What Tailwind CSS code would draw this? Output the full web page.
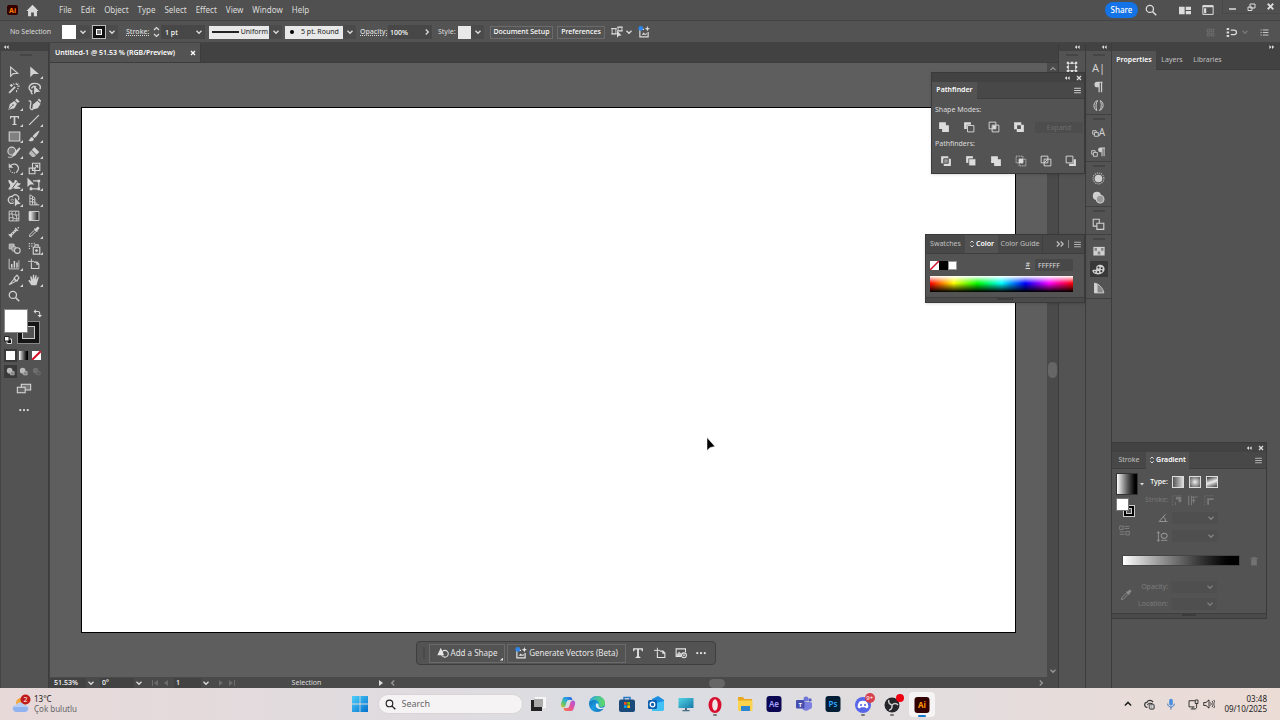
<!DOCTYPE html>
<html lang="en">
<head>
    <meta charset="UTF-8">
    <meta name="viewport" content="width=device-width, initial-scale=1.0">
    <title>Untitled-1 @ 51.53 % (RGB/Preview)</title>
    <script src="https://cdn.jsdelivr.net/npm/@tailwindcss/browser@4"></script>
</head>
<body class="relative flex flex-col h-screen overflow-hidden bg-[#535353] text-[#dcdcdc] text-[7px] leading-[10px] font-['Noto_Sans','Open_Sans',sans-serif]">

    <!-- Icons -->
    <svg class="absolute size-0">
        <defs>
            <linearGradient id="g-bw"><stop stop-color="#fff"/><stop offset="1" stop-color="#111"/></linearGradient>
            <linearGradient id="g-win" x2="1" y2="1"><stop stop-color="#4fd0fb"/><stop offset="1" stop-color="#0470cc"/></linearGradient>
            <linearGradient id="g-edge" x2="1" y2="1"><stop stop-color="#0c59a4"/><stop offset=".5" stop-color="#1b9de2"/><stop offset="1" stop-color="#1263b0"/></linearGradient>
            <linearGradient id="g-edge2"><stop stop-color="#2aa8ea"/><stop offset="1" stop-color="#62db5e"/></linearGradient>
            <linearGradient id="g-cop" x1="1" x2="0" y2="1"><stop stop-color="#2a5be4"/><stop offset=".4" stop-color="#2aa5e0"/><stop offset=".7" stop-color="#5cc570"/><stop offset="1" stop-color="#f4c13c"/></linearGradient>
            <linearGradient id="g-cop2" x1="1" x2="0" y2="1"><stop stop-color="#a05be8"/><stop offset=".5" stop-color="#e8509a"/><stop offset="1" stop-color="#f4803f"/></linearGradient>
            <linearGradient id="g-mon" x2="1" y2="1"><stop stop-color="#50d4e4"/><stop offset="1" stop-color="#1779a8"/></linearGradient>
        </defs>
        <symbol id="i-down" viewBox="0 0 8 8"><path d="M1.500 2.800 4 5.300l2.500-2.500" fill="none" stroke="currentColor" stroke-width="1.300"/></symbol>
        <symbol id="i-up" viewBox="0 0 8 8"><path d="M1.500 5.200 4 2.700l2.500 2.500" fill="none" stroke="currentColor" stroke-width="1.200"/></symbol>
        <symbol id="i-right" viewBox="0 0 8 8"><path d="M2.800 1.500 5.300 4 2.800 6.500" fill="none" stroke="currentColor" stroke-width="1.300"/></symbol>
        <symbol id="i-left" viewBox="0 0 8 8"><path d="M5.200 1.500 2.700 4l2.500 2.500" fill="none" stroke="currentColor" stroke-width="1.300"/></symbol>
        <symbol id="i-spin" viewBox="0 0 8 12"><path d="M1.500 4 4 1.500 6.500 4M1.500 8 4 10.500 6.500 8" fill="none" stroke="currentColor" stroke-width="1.200"/></symbol>
        <symbol id="i-collapse" viewBox="0 0 8 8"><path d="M4 1.500v5L1 4zM7.500 1.500v5l-3-2.500z" fill="currentColor"/></symbol>
        <symbol id="i-uncollapse" viewBox="0 0 8 8"><path d="M4 1.500v5L7 4zM.5 1.500v5l3-2.500z" fill="currentColor"/></symbol>
        <symbol id="i-expand" viewBox="0 0 8 8"><path d="m1.500 2 2 2-2 2M4.500 2l2 2-2 2" fill="none" stroke="currentColor" stroke-width="1"/></symbol>
        <symbol id="i-x" viewBox="0 0 8 8"><path d="m2 2 4 4M6 2 2 6" stroke="currentColor" stroke-width="1.300"/></symbol>
        <symbol id="i-menu" viewBox="0 0 8 8"><path d="M1 2h6M1 4h6M1 6h6" stroke="currentColor" stroke-width=".8"/></symbol>
        <symbol id="i-search" viewBox="0 0 16 16"><circle cx="6.500" cy="6.500" r="4.800" fill="none" stroke="currentColor" stroke-width="1.700"/><path d="m10 10 5 5" stroke="currentColor" stroke-width="2"/></symbol>
        <symbol id="i-home" viewBox="0 0 16 16"><path d="M8 1 15.500 8.500H13.500V15H9.700V10.500H6.300V15H2.500V8.500H.5z" fill="currentColor"/></symbol>
        <symbol id="i-dots" viewBox="0 0 16 16"><g fill="currentColor"><circle cx="3" cy="8" r="1.500"/><circle cx="8" cy="8" r="1.500"/><circle cx="13" cy="8" r="1.500"/></g></symbol>
        <!-- toolbox -->
        <symbol id="t-select" viewBox="0 0 16 16"><path d="M3.500 1.500v12L7 10.200l6-.4z" fill="none" stroke="currentColor" stroke-width="1.500"/></symbol>
        <symbol id="t-direct" viewBox="0 0 16 16"><path d="M3 .5v14.500l4.200-4.200 7.300-.3z" fill="currentColor"/></symbol>
        <symbol id="t-wand" viewBox="0 0 16 16"><path d="m1.500 14.500 8-8" stroke="currentColor" stroke-width="2.400"/><path d="M11 1v3M15.500 5.500h-3M14 2 12 4M7 2l1.500 1.500M12.500 8 14 9.500M2.500 4.500h4M4.500 2.500v4M11.500 10.500v3" stroke="currentColor" stroke-width="1.400"/></symbol>
        <symbol id="t-lasso" viewBox="0 0 16 16"><path d="M5.500 11C2 11 1 8 1.500 6 2.500 2 7 1 11 2s5 4 3.500 7M4 10.500c-1 2 0 3 1.500 4.500M4.500 8C4.500 5 9 5 10 6" fill="none" stroke="currentColor" stroke-width="1.700"/><path d="M7.500 4.500V15l2.800-2.800 4.700-.2z" fill="currentColor"/></symbol>
        <symbol id="t-pen" viewBox="0 0 16 16"><path d="M.5 15.500 2.500 8l6-4 3.500 3.500L8.500 13.500zM9.500 3l2-2.500L15.500 4.500 13 6.500z" fill="currentColor"/><path d="m1.500 14.500 4.500-4.500" stroke="#535353"/><circle cx="6.700" cy="9.300" r="1.100" fill="#535353"/></symbol>
        <symbol id="t-curve" viewBox="0 0 16 16"><path d="M5 14.500 6 8l5.500-4.500 4 3.500-3.500 5.500zM12 2.500l1.500-2L16 3 15.500 5.500z" fill="currentColor"/><path d="M.7 4c3-2 3.300 2 2.300 5s0 6 3 5" fill="none" stroke="currentColor" stroke-width="1.600"/></symbol>
        <symbol id="t-type" viewBox="0 0 16 16"><path d="M1.500 1.500h13v4h-1.400L12.500 3.300H9.200v9.400l2 .6v1.200H4.800v-1.200l2-.6V3.300H3.500L2.900 5.500H1.500z" fill="currentColor"/></symbol>
        <symbol id="t-line" viewBox="0 0 16 16"><path d="M1.500 14.500 14.500 1.500" stroke="currentColor" stroke-width="1.600"/></symbol>
        <symbol id="t-rect" viewBox="0 0 16 16"><path d="M1.500 2.500h13v11h-13z" fill="#808080" stroke="currentColor" stroke-width="1.400"/></symbol>
        <symbol id="t-brush" viewBox="0 0 16 16"><path d="M15.500.5C12 2 8 5.500 6.200 8.300l2.500 2.500C11.500 8.500 14.500 4 15.500.5zM5.500 9.300C2.500 9.500 3.500 13 .5 13.500c2 2.500 7.300 2 7.300-2z" fill="currentColor"/></symbol>
        <symbol id="t-shaper" viewBox="0 0 16 16"><circle cx="5.500" cy="7" r="4.500" fill="#777" stroke="currentColor" stroke-width="1.300"/><path d="M15.500 4 14 2.500 7 10l-1.500 4L9.500 12z" fill="currentColor"/><path d="M1 14h5" stroke="currentColor"/></symbol>
        <symbol id="t-eraser" viewBox="0 0 16 16"><path d="M8.500 1.500 15 8l-3.500 3.500L5 5z" fill="currentColor"/><path d="m4.200 5.800 6.500 6.500-2 2.200H5.500L1 10z" fill="currentColor" opacity=".8"/></symbol>
        <symbol id="t-rotate" viewBox="0 0 16 16"><path d="M3.500 5C6 1.500 13 2 14 8c0 2-.5 3.500-2 5" fill="none" stroke="currentColor" stroke-width="1.600"/><path d="M12 13c-3 3-9 1.500-10-4" fill="none" stroke="currentColor" stroke-width="1.500" stroke-dasharray="1.500 1.500"/><path d="M1 1.500v6h6z" fill="currentColor"/></symbol>
        <symbol id="t-scale" viewBox="0 0 16 16"><path d="M5.500 1.500h9v9h-9zM1.500 7.500h7v7h-7z" fill="none" stroke="currentColor" stroke-width="1.400"/><path d="m7 9 4.500-4.500M8.500 4H12v3.500" fill="none" stroke="currentColor" stroke-width="1.300"/></symbol>
        <symbol id="t-width" viewBox="0 0 16 16"><path d="M.5 2.500C4 1.500 4.500 6 6.500 6s.5-3.500 3-3.500S11 8 15.500 6c-.5 4-4 2.500-4 5 2-1 3.500 0 4 2.500-3-1-5.500 1-8.500-1-2 0-3 2.500-6.500 1.500C1 11.500 3.500 11 2.500 8 1.500 6 .5 6 .5 2.500z" fill="currentColor"/><path d="m5 13 6-8" stroke="#535353" stroke-width="1.200"/></symbol>
        <symbol id="t-free" viewBox="0 0 16 16"><path d="M.5.500v11L3.700 8.700 8.500 8.500z" fill="currentColor"/><path d="M7 4.500h6.500v9h-9V11" fill="none" stroke="currentColor" stroke-width="1.300"/><path d="M12 3h3v3h-3zM12 12h3v3h-3zM3 12h3v3H3z" fill="currentColor"/></symbol>
        <symbol id="t-builder" viewBox="0 0 16 16"><path d="M8 11a4 4 0 1 1-2-7 4 4 0 0 1 7 4" fill="none" stroke="currentColor" stroke-width="1.400"/><path d="M3 8h6M6 5v6" stroke="currentColor" stroke-dasharray="1 1"/><path d="M9 5v10.500l2.700-2.700 4-.2z" fill="currentColor"/></symbol>
        <symbol id="t-persp" viewBox="0 0 16 16"><path d="M2.500 1v13.500H15M2.500 1 9 5v9M2.500 5.500 9 8M2.500 10l6.500 1M6 3v11" fill="none" stroke="currentColor" stroke-width="1.200"/><path d="M9 9l5.500 5.500H9z" fill="currentColor" opacity=".5"/></symbol>
        <symbol id="t-mesh" viewBox="0 0 16 16"><path d="M1.500 1.500h13v13h-13zM1.500 6c4-3 8 3 13 0M1.500 11c4-3 8 3 13 0M6 1.500c-3 4 3 8 0 13M11 1.500c-3 4 3 8 0 13" fill="none" stroke="currentColor" stroke-width="1.200"/></symbol>
        <symbol id="t-grad" viewBox="0 0 16 16"><path d="M1.500 2h13v12h-13z" fill="url(#g-bw)" stroke="currentColor" stroke-width="1.200"/></symbol>
        <symbol id="t-measure" viewBox="0 0 16 16"><path d="m3 13 8-8" stroke="currentColor" stroke-width="3.200"/><path d="m1 11 4 4M9.500 2.500l4 4M13 3l1.500-1.500" stroke="currentColor" stroke-width="1.600"/><path d="m5.500 9.500 1.500 1.500M8 7l1.500 1.500" stroke="#535353"/></symbol>
        <symbol id="t-eye" viewBox="0 0 16 16"><path d="m2 14 .5-2.500L9 5l2 2-6.500 6.500z" fill="none" stroke="currentColor" stroke-width="1.300"/><path d="m8 4 4 4 1.200-1.200-.7-.8L15 3.500C15.500 2 14 .5 12.500 1L10 3.500l-.8-.7z" fill="currentColor"/></symbol>
        <symbol id="t-blend" viewBox="0 0 16 16"><path d="M1.500 2.500h6v6h-6z" fill="#aaa" stroke="currentColor"/><circle cx="7.500" cy="8.500" r="3" fill="#888" stroke="currentColor"/><circle cx="11.500" cy="10.500" r="3.500" fill="#535353" stroke="currentColor" stroke-width="1.300"/></symbol>
        <symbol id="t-spray" viewBox="0 0 16 16"><path d="M6.500 6.500h8v8.500h-8zM8.500 6V3.500h4V6" fill="none" stroke="currentColor" stroke-width="1.400"/><circle cx="10.500" cy="10.500" r="1.700" fill="currentColor"/><path d="M1 2h1.500M4 2h1.500M1 5h1.500M4 5h1.500M7 1.500h1.500M1 8h1.500" stroke="currentColor" stroke-width="1.400"/></symbol>
        <symbol id="t-graph" viewBox="0 0 16 16"><path d="M1.500 1v13.500H15" fill="none" stroke="currentColor" stroke-width="1.200"/><path d="M4 8h2v5H4zM7.500 4h2v9h-2zM11 6h2v7h-2z" fill="currentColor"/><path d="M14.500 3v10" stroke="currentColor"/></symbol>
        <symbol id="t-artb" viewBox="0 0 16 16"><path d="M4.500 1v5M0 4.500h8" stroke="currentColor" stroke-width="1.200"/><path d="M4.500 6v8h10V8L12 5.500H8" fill="none" stroke="currentColor" stroke-width="1.400"/><path d="M11 5v4h4z" fill="currentColor"/></symbol>
        <symbol id="t-slice" viewBox="0 0 16 16"><path d="M1.500 14.500 8 7l2.500 2.500z" fill="none" stroke="currentColor" stroke-width="1.400"/><path d="m8 5.500 4 4 2.500-4.500L12 1.500z" fill="none" stroke="currentColor" stroke-width="1.600"/></symbol>
        <symbol id="t-hand" viewBox="0 0 16 16"><path d="M4.500 15C3 12 1.500 11 .5 8.500 1.500 7.500 3 8.500 4 10L3 3.500C3.500 2.500 4.500 3 5 4l1 3.500L6.500 1.500C7 .5 8 .5 8.300 1.500L8.500 7l1.500-5c.5-1 1.500-.5 1.500.5L11 7.500l2-3.500c.7-.7 1.500 0 1.200 1L12.500 10.500C12 13 11.500 14 11 15z" fill="currentColor"/></symbol>
        <symbol id="t-swap" viewBox="0 0 16 16"><path d="M4 4.500h4.500c2 0 3.500 1.500 3.500 3.500v3" fill="none" stroke="currentColor" stroke-width="1.800"/><path d="M5 .5v8l-4-4zM8 10.500h8l-4 4.500z" fill="currentColor"/></symbol>
        <symbol id="t-modes" viewBox="0 0 16 16"><circle cx="6.500" cy="6.500" r="5" fill="currentColor"/><path d="M8 8h6.500v6H8z" fill="#888" stroke="currentColor" stroke-width="1.200"/></symbol>
        <symbol id="t-screen" viewBox="0 0 20 14"><path d="M6.500 1.500h12v7.500h-12z" fill="#777" stroke="currentColor" stroke-width="1.300"/><path d="M1.500 5.500h10v7h-10z" fill="#666" stroke="currentColor" stroke-width="1.300"/></symbol>
        <!-- pathfinder -->
        <symbol id="p-unite" viewBox="0 0 16 16"><path d="M1.500 1.500h9v4h4v9h-9v-4h-4z" fill="currentColor"/></symbol>
        <symbol id="p-minus" viewBox="0 0 16 16"><path d="M1.500 1.500h9V5H5v5.500H1.500z" fill="currentColor"/><path d="M6 6h8.500v8.500H6z" fill="none" stroke="currentColor" stroke-width="1.200"/></symbol>
        <symbol id="p-inter" viewBox="0 0 16 16"><path d="M1.500 1.500h9v9h-9zM5.500 5.500h9v9h-9z" fill="none" stroke="currentColor" stroke-width="1.200"/><path d="M6 6h4.500v4.500H6z" fill="currentColor"/></symbol>
        <symbol id="p-excl" viewBox="0 0 16 16"><path d="M1.500 1.500h9.500V5h3.500v9.500H5V11H1.500zM5.500 5.500v5h5v-5z" fill="currentColor" fill-rule="evenodd"/></symbol>
        <symbol id="p-divide" viewBox="0 0 16 16"><path d="M1.500 1.500h9.500v9.500h-9.500zM5 5h9.500v9.500H5z" fill="currentColor"/><path d="M5 11V5h6v6z" fill="#999" stroke="#484848" stroke-width="1.200"/></symbol>
        <symbol id="p-trim" viewBox="0 0 16 16"><path d="M1.500 1.500h9v9h-9z" fill="currentColor"/><path d="M5 5h9.500v9.500H5z" fill="currentColor" stroke="#484848"/></symbol>
        <symbol id="p-crop" viewBox="0 0 16 16"><path d="M1.500 1.500h9v9h-9zM5.500 5.500h9v9h-9z" fill="none" stroke="currentColor" stroke-dasharray="2 1"/><path d="M5 5h6v6H5z" fill="currentColor"/></symbol>
        <symbol id="p-outline" viewBox="0 0 16 16"><path d="M1.500 1.500h9v9h-9zM5.500 5.500h9v9h-9zM6 10l4-4" fill="none" stroke="currentColor" stroke-width="1.200"/></symbol>
        <symbol id="p-back" viewBox="0 0 16 16"><path d="M1.500 1.500h9v9h-9z" fill="none" stroke="currentColor" stroke-width="1.200"/><path d="M11.500 5.500h3v9h-9v-3h6z" fill="currentColor"/></symbol>
        <!-- dock -->
        <symbol id="d-trans" viewBox="0 0 16 16"><path d="M3 3h10v10H3z" fill="none" stroke="currentColor" stroke-width="1.200"/><path d="M1 1h3v3H1zM6.500 1h3v3h-3zM12 1h3v3h-3zM1 6.500h3v3H1zM12 6.500h3v3h-3zM1 12h3v3H1zM6.500 12h3v3h-3zM12 12h3v3h-3z" fill="currentColor"/></symbol>
        <symbol id="d-para" viewBox="0 0 16 16"><path d="M13 2H6.500a3.500 3.500 0 0 0 0 7H8v6h1.500V3.500h1.500V15h1.500V3.500h.5z" fill="currentColor"/></symbol>
        <symbol id="d-open" viewBox="0 0 16 16"><path d="M7 2C1 3 1 13 6 14M9 14C15 13 15 3 10 2M6 14C4 10 5 4 7 2M9 14c3-2 3-9 1-12" fill="none" stroke="currentColor" stroke-width="1.200"/></symbol>
        <symbol id="d-box" viewBox="0 0 10 10"><path d="M1 1h5v5H1z" fill="none" stroke="currentColor" stroke-width="1.300"/><path d="M3.500 3.500H9V9H3.500z" fill="#535353" stroke="currentColor" stroke-width="1.300"/></symbol>
        <symbol id="d-sun" viewBox="0 0 16 16"><circle cx="8" cy="8" r="4.700" fill="currentColor"/><circle cx="8" cy="8" r="6.700" fill="none" stroke="currentColor" stroke-width="1.300" stroke-dasharray="1.200 1.400"/></symbol>
        <symbol id="d-circ" viewBox="0 0 16 16"><circle cx="6" cy="6" r="5" fill="currentColor"/><circle cx="10" cy="10" r="4.700" fill="#999" stroke="currentColor" stroke-width="1.300"/></symbol>
        <symbol id="d-copy" viewBox="0 0 16 16"><path d="M1.500 1.500H9V10H1.500z" fill="none" stroke="currentColor" stroke-width="1.300"/><path d="M6 6.500h8.500v7.500H6z" fill="#535353" stroke="currentColor" stroke-width="1.400"/></symbol>
        <symbol id="d-swat" viewBox="0 0 16 16"><path d="M.5 2.500h15v11.500H.5z" fill="currentColor"/><path d="M2 4h3.300v3.500H2zM6.300 8.500h3.400v4H6.300zM10.700 4H14v3.500h-3.300z" fill="#888"/></symbol>
        <symbol id="d-color" viewBox="0 0 16 16"><path d="M8 2.500c4-1 7.500 1 7.500 5s-4 6.500-8 6.500S.5 12 .5 9.500 4 9 5 8 4 3.500 8 2.500z" fill="currentColor"/><g fill="#333"><circle cx="8" cy="5.500" r="1.300"/><circle cx="12" cy="6.500" r="1.300"/><circle cx="11.500" cy="10" r="1.300"/><circle cx="7.500" cy="11" r="1.300"/><circle cx="3.500" cy="10.700" r="1"/></g></symbol>
        <symbol id="d-guide" viewBox="0 0 16 16"><path d="M2 1.500c6 1 11 6 12.500 13H2z" fill="#888" stroke="currentColor" stroke-width="1.200"/><path d="M2 1.500 6 3v11.500H2z" fill="currentColor"/></symbol>
        <!-- misc app icons -->
        <symbol id="m-gen" viewBox="0 0 16 16"><path d="M8 4.500H2.500v10h11V8" fill="none" stroke="currentColor" stroke-width="1.600"/><path d="m5 11.500 2.500-3 2 2 2-1.500v2.500z" fill="currentColor"/><path d="m12.500 0 1 2.500L16 3.500l-2.500 1-1 2.500-1-2.500L9 3.500l2.500-1z" fill="currentColor"/><circle cx="3.700" cy="3.200" r="3.200" fill="#2f86e8"/></symbol>
        <symbol id="m-shape" viewBox="0 0 16 16"><circle cx="10.500" cy="9" r="4.500" fill="none" stroke="currentColor" stroke-width="1.400"/><path d="M5 1 9.500 11H.5z" fill="currentColor"/></symbol>
        <symbol id="m-image" viewBox="0 0 16 16"><path d="M8 12.500H1.500v-10h12.500V7" fill="none" stroke="currentColor" stroke-width="1.400"/><path d="m2 10 3.500-4 3 3L11 6.500V12H2z" fill="currentColor" opacity=".8"/><circle cx="12" cy="11" r="3.200" fill="#535353" stroke="currentColor" stroke-width="1.400"/><path d="M12 9.500v3M10.500 11h3" stroke="currentColor"/></symbol>
        <symbol id="m-align" viewBox="0 0 16 16"><path d="M1.500 3.500h5v7h-5zM0 3.500h8M0 10.500h8M9.500 1.500h5v5h-5zM8 6.500h8M8 1.500h8" fill="none" stroke="currentColor" stroke-width="1.200"/><path d="M8 6v9.500l2.500-2.500 3.500-.3z" fill="currentColor"/></symbol>
        <symbol id="m-grid" viewBox="0 0 16 16"><path d="M2 2h5v5H2zM9.500 2h4.500v5H9.500zM2 9.500h5V14H2zM9.500 9.500h4.500V14H9.500z" fill="none" stroke="currentColor" stroke-width="1.600"/></symbol>
        <symbol id="m-arr" viewBox="0 0 16 12"><path d="M0 1h7.500v10H0zM9 1h7v4.300H9zM9 6.700h7V11H9z" fill="currentColor"/></symbol>
        <symbol id="m-work" viewBox="0 0 16 14"><path d="M.8.8h14.400v12.400H.8z" fill="none" stroke="currentColor" stroke-width="1.400"/><path d="M1 1h14v2.200H1zM2.500 4.500h3v7h-3z" fill="currentColor"/></symbol>
        <symbol id="m-snap" viewBox="0 0 16 16"><path d="M1 1.500h3.500v3H1zM1 6.500h3.500v3H1zM1 11.500h3.500v3H1z" fill="currentColor"/><path d="M7 4.500h5a3 3 0 0 1 0 6.500H7" fill="none" stroke="currentColor" stroke-width="1.800"/></symbol>
        <symbol id="m-list" viewBox="0 0 16 16"><path d="M1 3.500h2M1 8h2M1 12.500h2M5 3.500h10M5 8h10M5 12.500h10" stroke="currentColor" stroke-width="1.500"/></symbol>
        <symbol id="m-angle" viewBox="0 0 16 16"><path d="M15 13.500H2L12 2M8 6c3 1.500 4 4 4 7" fill="none" stroke="currentColor" stroke-width="1.400"/></symbol>
        <symbol id="m-aspect" viewBox="0 0 16 16"><path d="M2 1v14M0 3.500 2 1l2 2.500M0 12.500 2 15l2-2.500M6 13.500h9" fill="none" stroke="currentColor" stroke-width="1.200"/><ellipse cx="10.500" cy="7" rx="4.500" ry="3.700" fill="none" stroke="currentColor" stroke-width="1.400"/></symbol>
        <symbol id="m-within" viewBox="0 0 16 16"><path d="M1 15V1h14" fill="none" stroke="currentColor" stroke-dasharray="2 2"/><path d="M6 3h7v7h-3V6H6zM5 10v5" fill="currentColor" stroke="currentColor"/></symbol>
        <symbol id="m-along" viewBox="0 0 16 16"><path d="M1 1v14M5 1v14M5 3h9M5 8h6M8 3v9" fill="none" stroke="currentColor" stroke-width="1.600"/></symbol>
        <symbol id="m-across" viewBox="0 0 16 16"><path d="M1 15V1h14" fill="none" stroke="currentColor" stroke-dasharray="2 2"/><path d="M6 14V6h8" fill="none" stroke="currentColor" stroke-width="2.600"/></symbol>
        <symbol id="m-rev" viewBox="0 0 16 16"><path d="M1 1.500h5v5H1zM8 2h7M8 5h7M10 9.500h5v5h-5zM1 10h7M1 13.500h7" fill="none" stroke="currentColor" stroke-width="1.200"/></symbol>
        <symbol id="m-trash" viewBox="0 0 16 16"><path d="M2 4h12M6 4V2h4v2" fill="none" stroke="currentColor" stroke-width="1.500"/><path d="M3.500 5h9V15h-9z" fill="currentColor"/></symbol>
    </svg>

    <!-- Title bar -->
    <header class="flex items-center h-5 shrink-0 text-[8px] bg-[#505050]">
        <svg class="ml-[7px] w-[11px] h-[10px]" viewBox="0 0 11 10"><rect width="11" height="10" rx="2" fill="#330000"/><text x="5.500" y="7.500" text-anchor="middle" font-size="7" font-weight="700" fill="#ff7c00">Ai</text></svg>
        <button class="ml-[7px] px-px"><svg class="size-[13px] text-[#d8d8d8]"><use href="#i-home"/></svg></button>
        <nav class="ml-[19px] flex items-center gap-[9px] pb-px">
            <button>File</button>
            <button>Edit</button>
            <button>Object</button>
            <button>Type</button>
            <button>Select</button>
            <button>Effect</button>
            <button>View</button>
            <button>Window</button>
            <button>Help</button>
        </nav>
        <div class="ml-auto flex items-center">
            <button class="w-[33px] h-4 rounded-full bg-[#1473e6] text-white font-medium">Share</button>
            <button class="ml-[7px]"><svg class="size-3"><use href="#i-search"/></svg></button>
            <button class="ml-[22px]"><svg class="w-3 h-[9px]"><use href="#m-arr"/></svg></button>
            <button class="ml-[11px]"><svg class="w-3 h-[10px]"><use href="#m-work"/></svg></button>
            <div class="ml-2 mb-[6px] flex items-center h-[14px] border-l border-b border-[#484848]">
                <button class="w-[19px] flex justify-center pt-1"><svg class="size-[9px]" viewBox="0 0 9 9"><path d="M1 5h7" stroke="currentColor" stroke-width="1.500"/></svg></button>
                <button class="w-[18px] flex justify-center pt-px"><svg class="size-[9px]" viewBox="0 0 9 9"><path d="M3 1h5v4H3zM1 4h4v3.500H1z" fill="none" stroke="currentColor"/></svg></button>
                <button class="w-[20px] flex justify-center"><svg class="size-[11px]"><use href="#i-x"/></svg></button>
            </div>
        </div>
    </header>

    <!-- Control bar -->
    <section class="flex items-center h-[23px] shrink-0 pl-[10px] pt-px border-t border-b border-[#444444] bg-[#535353]">
        <span class="w-[52px]">No Selection</span>
        <button class="size-[14px] bg-white" aria-label="Fill"></button>
        <button class="w-[14px] h-[14px] flex items-center justify-center bg-[#4b4b4b]"><svg class="size-2"><use href="#i-down"/></svg></button>
        <button class="ml-[2px] size-[14px] grid place-items-center border border-[#bbbbbb] bg-[#111111]" aria-label="Stroke color"><span class="size-[6px] border border-white bg-[#777777]"></span></button>
        <button class="w-[12px] h-[14px] flex items-center justify-center bg-[#4b4b4b]"><svg class="size-2"><use href="#i-down"/></svg></button>
        <label for="strokeWeight" class="ml-2 w-[26px] font-medium underline decoration-dotted">Stroke:</label>
        <svg class="w-[9px] h-3"><use href="#i-spin"/></svg>
        <input id="strokeWeight" value="1 pt" class="w-[31px] h-[14px] pl-[4px] bg-[#474747] font-medium text-white">
        <button class="w-[13px] h-[14px] flex items-center justify-center bg-[#474747]"><svg class="size-2"><use href="#i-down"/></svg></button>
        <button class="ml-1 w-[60px] h-[13px] flex items-center justify-between pl-[3px] pr-px bg-[#e8e8e8] text-[#222222]"><span class="w-[27px] h-[2px] bg-[#222222]"></span>Uniform</button>
        <button class="w-[13px] h-[14px] flex items-center justify-center bg-[#4b4b4b]"><svg class="size-2"><use href="#i-down"/></svg></button>
        <button class="ml-[3px] w-[58px] h-[13px] flex items-center gap-[7px] pl-[5px] bg-[#e8e8e8] text-[#222222]"><span class="size-1 rounded-full bg-black"></span>5 pt. Round</button>
        <button class="w-[13px] h-[14px] flex items-center justify-center bg-[#4b4b4b]"><svg class="size-2"><use href="#i-down"/></svg></button>
        <label for="opacity" class="ml-[4px] w-[28px] font-medium underline decoration-dotted">Opacity:</label>
        <input id="opacity" value="100%" class="w-[34px] h-[14px] pl-[2px] bg-[#474747] font-medium text-white">
        <button class="w-[10px] h-[14px] flex items-center justify-center bg-[#474747]"><svg class="size-2"><use href="#i-right"/></svg></button>
        <span class="ml-[6px] w-[20px]">Style:</span>
        <button class="size-[13px] bg-[#e8e8e8]" aria-label="Graphic style"></button>
        <button class="w-[13px] h-[14px] flex items-center justify-center bg-[#4b4b4b]"><svg class="size-2"><use href="#i-down"/></svg></button>
        <button class="ml-[6px] w-[63px] h-[13px] border border-[#6b6b6b] font-medium leading-[10px] text-white">Document Setup</button>
        <button class="ml-[4px] w-[48px] h-[13px] border border-[#6b6b6b] font-medium leading-[10px] text-white">Preferences</button>
        <button class="ml-[6px]"><svg class="size-3"><use href="#m-align"/></svg></button>
        <button class="ml-[2px]"><svg class="size-2"><use href="#i-down"/></svg></button>
        <button class="ml-[5px]"><svg class="size-3"><use href="#m-gen"/></svg></button>
        <div class="ml-auto flex items-center gap-[7px] pr-[11px]">
            <svg class="size-[9px] text-[#707070]"><use href="#m-grid"/></svg>
            <button class="ml-1 flex items-center gap-1"><svg class="size-[11px]"><use href="#m-snap"/></svg><svg class="size-2 text-[#777777]"><use href="#i-down"/></svg></button>
            <button class="ml-1"><svg class="size-[9px]"><use href="#m-list"/></svg></button>
        </div>
    </section>

    <main class="relative flex flex-1 min-h-0 bg-[#424242]">
        <!-- Toolbox -->
        <aside class="w-[49px] shrink-0 flex flex-col border-r border-[#3c3c3c]">
            <button class="h-2 pl-[3px]"><svg class="size-[6px]"><use href="#i-collapse"/></svg></button>
            <div class="flex-1 flex flex-col border-l border-[#444444] bg-[#535353] pl-[3px]">
                <div class="h-[13px] flex justify-center pt-[3px]"><span class="w-3 h-[2px] bg-[#454545]"></span></div>
                <!-- data-more marks a tool that has a flyout -->
                <div class="grid grid-cols-[20px_20px] auto-rows-[16px] text-[#d2d2d2] [&>button]:relative [&>button]:grid [&>button]:place-items-center [&>[data-more]]:after:absolute [&>[data-more]]:after:right-px [&>[data-more]]:after:bottom-px [&>[data-more]]:after:size-[3px] [&>[data-more]]:after:bg-current [&>[data-more]]:after:[clip-path:polygon(100%_0,100%_100%,0_100%)]">
                    <button><svg class="size-3"><use href="#t-select"/></svg></button>
                    <button data-more><svg class="size-3"><use href="#t-direct"/></svg></button>
                    <button><svg class="size-3"><use href="#t-wand"/></svg></button>
                    <button><svg class="size-[13px]"><use href="#t-lasso"/></svg></button>
                    <button data-more><svg class="size-3"><use href="#t-pen"/></svg></button>
                    <button><svg class="size-[13px]"><use href="#t-curve"/></svg></button>
                    <button data-more><svg class="size-[11px]"><use href="#t-type"/></svg></button>
                    <button data-more><svg class="size-3"><use href="#t-line"/></svg></button>
                    <button data-more><svg class="size-[13px]"><use href="#t-rect"/></svg></button>
                    <button data-more><svg class="size-3"><use href="#t-brush"/></svg></button>
                    <button data-more><svg class="size-[14px]"><use href="#t-shaper"/></svg></button>
                    <button data-more><svg class="size-3"><use href="#t-eraser"/></svg></button>
                    <button data-more><svg class="size-3"><use href="#t-rotate"/></svg></button>
                    <button data-more><svg class="size-[13px]"><use href="#t-scale"/></svg></button>
                    <button data-more><svg class="size-[13px]"><use href="#t-width"/></svg></button>
                    <button data-more><svg class="size-[14px]"><use href="#t-free"/></svg></button>
                    <button data-more><svg class="size-[14px]"><use href="#t-builder"/></svg></button>
                    <button data-more><svg class="size-3"><use href="#t-persp"/></svg></button>
                    <button><svg class="size-3"><use href="#t-mesh"/></svg></button>
                    <button><svg class="size-3"><use href="#t-grad"/></svg></button>
                    <button><svg class="size-3"><use href="#t-measure"/></svg></button>
                    <button data-more><svg class="size-3"><use href="#t-eye"/></svg></button>
                    <button><svg class="size-[13px]"><use href="#t-blend"/></svg></button>
                    <button data-more><svg class="size-[13px]"><use href="#t-spray"/></svg></button>
                    <button data-more><svg class="size-3"><use href="#t-graph"/></svg></button>
                    <button><svg class="size-3"><use href="#t-artb"/></svg></button>
                    <button data-more><svg class="size-3"><use href="#t-slice"/></svg></button>
                    <button data-more><svg class="size-3"><use href="#t-hand"/></svg></button>
                    <button><svg class="size-3"><use href="#i-search"/></svg></button>
                </div>
                <!-- Fill / stroke -->
                <div class="relative h-[43px]">
                    <button class="absolute left-[13px] top-[17px] size-[23px] grid place-items-center border border-[#888888] bg-[#151515]" aria-label="Stroke"><span class="size-[13px] border border-[#cccccc] bg-[#535353]"></span></button>
                    <button class="absolute left-0 top-[5px] size-6 border border-[#888888] bg-white" aria-label="Fill"></button>
                    <svg class="absolute left-[29px] top-[5px] size-[9px]"><use href="#t-swap"/></svg>
                    <svg class="absolute left-0 top-8 size-2" viewBox="0 0 8 8"><path d="M3 3h4.500v4.500H3z" fill="#111" stroke="#ddd"/><path d="M.5.5H5V5H.5z" fill="#fff" stroke="#222"/></svg>
                </div>
                <div class="mt-[2px] flex">
                    <button class="size-[13px] grid place-items-center bg-[#3a3a3a]" aria-label="Color"><span class="size-[9px] bg-white"></span></button>
                    <button class="size-[13px] grid place-items-center" aria-label="Gradient"><span class="size-[9px] bg-linear-to-r from-white to-black"></span></button>
                    <button class="size-[13px] grid place-items-center" aria-label="None"><svg class="size-[9px]" viewBox="0 0 9 9"><path d="M0 0h9v9H0z" fill="#fff"/><path d="m0 9 9-9" stroke="#d3122a" stroke-width="2"/></svg></button>
                </div>
                <div class="mt-[3px] flex">
                    <button class="size-[13px] grid place-items-center bg-[#3a3a3a] text-[#bbbbbb]" aria-label="Draw normal"><svg class="size-[9px]"><use href="#t-modes"/></svg></button>
                    <button class="size-[13px] grid place-items-center text-[#bbbbbb]" aria-label="Draw behind"><svg class="size-[9px]"><use href="#t-modes"/></svg></button>
                    <button class="size-[13px] grid place-items-center opacity-20" aria-label="Draw inside"><svg class="size-[9px]"><use href="#t-modes"/></svg></button>
                </div>
                <button class="mt-[5px] w-10 flex justify-center"><svg class="w-4 h-[11px]"><use href="#t-screen"/></svg></button>
                <button class="mt-[10px] w-10 flex justify-center"><svg class="size-3"><use href="#i-dots"/></svg></button>
            </div>
        </aside>

        <!-- Document -->
        <section class="ml-px flex-1 min-w-0 flex flex-col">
            <div class="h-5 flex border-b border-[#3c3c3c]">
                <div class="h-[19px] flex items-center gap-[14px] pl-[5px] pr-[3px] bg-[#535353] border-r border-[#3c3c3c] text-white">
                    <span class="font-semibold">Untitled-1 @ 51.53 % (RGB/Preview)</span>
                    <button><svg class="size-[8px]"><use href="#i-x"/></svg></button>
                </div>
            </div>
            <div class="flex-1 min-h-0 flex">
                <div class="relative flex-1 min-w-0 flex pt-11 pb-11 px-[31px] bg-[#5e5e5e]">
                    <div class="flex-1 border border-black bg-white"></div>

                    <!-- Contextual task bar -->
                    <div class="absolute left-[366px] bottom-3 h-6 flex items-center pl-[6px] pr-2 rounded-sm border border-[#3e3e3e] bg-[#535353] text-[8px] text-[#e6e6e6]">
                        <span class="w-[2px] h-3 mr-1 bg-[#4a4a4a]"></span>
                        <button class="relative w-[76px] h-[19px] flex items-center justify-center gap-[2px] border border-[#6a6a6a] after:absolute after:right-px after:bottom-px after:size-[3px] after:bg-current after:[clip-path:polygon(100%_0,100%_100%,0_100%)]"><svg class="size-3"><use href="#m-shape"/></svg>Add a Shape</button>
                        <button class="ml-[2px] w-[119px] h-[19px] flex items-center justify-center gap-[2px] border border-[#6a6a6a]"><svg class="size-3"><use href="#m-gen"/></svg>Generate Vectors (Beta)</button>
                        <button class="ml-[6px]"><svg class="size-3"><use href="#t-type"/></svg></button>
                        <button class="ml-[10px]"><svg class="size-3"><use href="#t-artb"/></svg></button>
                        <button class="ml-[9px]"><svg class="size-3"><use href="#m-image"/></svg></button>
                        <button class="ml-2"><svg class="size-3"><use href="#i-dots"/></svg></button>
                    </div>

                    <!-- Mouse pointer -->
                    <svg class="absolute left-[656px] top-[374px] w-[10px] h-4" viewBox="0 0 10 16"><path d="M1 .5v13l3.200-3L9 9.500z" fill="#000" stroke="#fff" stroke-width=".5"/></svg>
                </div>
                <div class="w-[11px] flex flex-col items-center justify-between py-[2px] bg-[#4a4a4a] text-[#999999]">
                    <svg class="size-2"><use href="#i-up"/></svg>
                    <span class="w-[9px] h-4 rounded-full bg-[#666666]"></span>
                    <svg class="size-2"><use href="#i-down"/></svg>
                </div>
            </div>
            <!-- Status bar -->
            <footer class="h-[11px] flex items-center pt-px bg-[#4a4a4a]">
                <select aria-label="Zoom" class="appearance-none w-[36px] h-[10px] pl-[4px] bg-[#424242] font-medium text-white"><option>51.53%</option></select>
                <svg class="h-2 w-[10px]"><use href="#i-down"/></svg>
                <select aria-label="Rotation" class="appearance-none ml-[4px] w-[34px] h-[10px] pl-[2px] bg-[#424242] font-medium text-white"><option>0°</option></select>
                <svg class="h-2 w-[10px]"><use href="#i-down"/></svg>
                <button class="ml-[7px]" aria-label="First"><svg class="size-2 text-[#6c6c6c]" viewBox="0 0 8 8"><path d="M1 1h1v6H1zM7 1v6L3 4z" fill="currentColor"/></svg></button>
                <button class="ml-[3px]" aria-label="Previous"><svg class="size-2 text-[#6c6c6c]" viewBox="0 0 8 8"><path d="M6 1v6L2 4z" fill="currentColor"/></svg></button>
                <select aria-label="Artboard" class="appearance-none ml-[4px] w-[27px] h-[10px] pl-[2px] bg-[#424242] font-medium text-white"><option>1</option></select>
                <svg class="h-2 w-[10px]"><use href="#i-down"/></svg>
                <button class="ml-[6px]" aria-label="Next"><svg class="size-2 text-[#6c6c6c]" viewBox="0 0 8 8"><path d="M2 1v6l4-3z" fill="currentColor"/></svg></button>
                <button class="ml-[3px]" aria-label="Last"><svg class="size-2 text-[#6c6c6c]" viewBox="0 0 8 8"><path d="M6 1h1v6H6zM1 1v6l4-3z" fill="currentColor"/></svg></button>
                <span class="w-[141px] text-center">Selection</span>
                <svg class="size-2" viewBox="0 0 8 8"><path d="M2 1v6l4-3z" fill="currentColor"/></svg>
                <div class="ml-1 flex-1 flex items-center justify-between pr-[13px] text-[#999999]">
                    <svg class="size-2"><use href="#i-left"/></svg>
                    <span class="w-4 h-[9px] rounded-full bg-[#666666]"></span>
                    <svg class="size-2"><use href="#i-right"/></svg>
                </div>
            </footer>
        </section>

        <!-- Collapsed docks -->
        <aside class="w-[27px] shrink-0 flex flex-col border-l border-[#3c3c3c]">
            <button class="h-2 flex items-center justify-end pr-[5px]"><svg class="size-[6px]"><use href="#i-collapse"/></svg></button>
            <div class="flex-1 flex flex-col items-center bg-[#535353]">
                <span class="mt-[3px] w-3 h-[2px] bg-[#454545]"></span>
                <button class="h-[22px] grid place-items-center"><svg class="size-3"><use href="#d-trans"/></svg></button>
            </div>
        </aside>
        <aside class="w-[26px] shrink-0 flex flex-col border-l border-[#3c3c3c]">
            <button class="h-2 flex items-center justify-end pr-1"><svg class="size-[6px]"><use href="#i-collapse"/></svg></button>
            <div class="flex-1 bg-[#535353] text-[#d0d0d0]">
                <div class="flex flex-col items-center border-b border-[#404040]">
                    <span class="mt-[3px] mb-[2px] w-3 h-[2px] bg-[#454545]"></span>
                    <button class="h-[19px] text-[11px] leading-[17px]">A|</button>
                    <button class="h-[19px]"><svg class="size-[13px]"><use href="#d-para"/></svg></button>
                    <button class="h-[18px]"><svg class="size-[13px]"><use href="#d-open"/></svg></button>
                </div>
                <div class="flex flex-col items-center border-b border-[#404040]">
                    <span class="mt-[3px] mb-[2px] w-3 h-[2px] bg-[#454545]"></span>
                    <button class="h-[19px] flex items-center text-[10px]"><svg class="size-[7px] mt-1"><use href="#d-box"/></svg>A</button>
                    <button class="h-[20px] flex items-center"><svg class="size-[7px] mt-1"><use href="#d-box"/></svg><svg class="size-[11px] -ml-[2px]"><use href="#d-para"/></svg></button>
                </div>
                <div class="flex flex-col items-center border-b border-[#404040]">
                    <span class="mt-[3px] mb-[2px] w-3 h-[2px] bg-[#454545]"></span>
                    <button class="h-[19px]"><svg class="size-[13px]"><use href="#d-sun"/></svg></button>
                    <button class="h-[18px]"><svg class="size-[13px]"><use href="#d-circ"/></svg></button>
                </div>
                <div class="flex flex-col items-center border-b border-[#404040]">
                    <span class="mt-[3px] mb-[2px] w-3 h-[2px] bg-[#454545]"></span>
                    <button class="h-[20px]"><svg class="size-[13px]"><use href="#d-copy"/></svg></button>
                </div>
                <div class="flex flex-col items-center border-b border-[#404040]">
                    <span class="mt-[3px] mb-px w-3 h-[2px] bg-[#454545]"></span>
                    <button class="h-[19px]"><svg class="size-3"><use href="#d-swat"/></svg></button>
                    <button class="h-[16px] w-[18px] my-px grid place-items-center bg-[#383838]"><svg class="size-[13px]"><use href="#d-color"/></svg></button>
                    <button class="h-[20px]"><svg class="size-3"><use href="#d-guide"/></svg></button>
                </div>
            </div>
        </aside>

        <!-- Properties dock -->
        <aside class="w-[169px] shrink-0 flex flex-col border-l border-[#3c3c3c]">
            <button class="h-2 flex items-center justify-end pr-[5px]"><svg class="size-[6px]"><use href="#i-uncollapse"/></svg></button>
            <div class="h-[19px] flex items-center border-b border-[#3c3c3c] text-[#c0c0c0]">
                <button class="w-[44px] h-[19px] bg-[#535353] font-semibold text-white">Properties</button>
                <button class="w-[32px]">Layers</button>
                <button class="w-[39px]">Libraries</button>
            </div>
            <div class="flex-1 bg-[#535353]"></div>
        </aside>

        <!-- Pathfinder -->
        <section class="absolute right-[195px] top-[29px] w-[154px] h-[102px] border border-[#3a3a3a] bg-[#535353] shadow">
            <div class="h-[9px] flex items-center justify-end gap-[5px] pr-[1px] bg-[#424242]">
                <svg class="size-[6px]"><use href="#i-collapse"/></svg>
                <svg class="size-2"><use href="#i-x"/></svg>
            </div>
            <div class="h-[17px] flex items-center justify-between pr-[2px] border-b border-[#3e3e3e] bg-[#484848]">
                <button class="w-[45px] h-[17px] bg-[#535353] font-semibold text-white">Pathfinder</button>
                <svg class="size-[9px]"><use href="#i-menu"/></svg>
            </div>
            <p class="mt-[6px] pl-[3px]">Shape Modes:</p>
            <div class="h-[24px] flex items-center pl-[6px] gap-[13px]">
                <button><svg class="size-3"><use href="#p-unite"/></svg></button>
                <button><svg class="size-3"><use href="#p-minus"/></svg></button>
                <button><svg class="size-3"><use href="#p-inter"/></svg></button>
                <button><svg class="size-3"><use href="#p-excl"/></svg></button>
                <button disabled class="-ml-[3px] w-[48px] h-[11px] leading-[11px] bg-[#4d4d4d] text-[#6c6c6c]">Expand</button>
            </div>
            <p class="pl-[3px]">Pathfinders:</p>
            <div class="h-[24px] flex items-center pl-[8px] gap-[13px]">
                <button><svg class="size-3"><use href="#p-divide"/></svg></button>
                <button><svg class="size-3"><use href="#p-trim"/></svg></button>
                <button><svg class="size-3"><use href="#p-unite"/></svg></button>
                <button><svg class="size-3"><use href="#p-crop"/></svg></button>
                <button><svg class="size-3"><use href="#p-outline"/></svg></button>
                <button><svg class="size-3"><use href="#p-back"/></svg></button>
            </div>
        </section>

        <!-- Color -->
        <section class="absolute right-[195px] top-[191px] w-[160px] h-[69px] flex flex-col border border-[#3a3a3a] bg-[#535353] shadow">
            <div class="h-[19px] flex items-center pr-[2px] border-b border-[#3e3e3e] bg-[#484848] text-[#c0c0c0]">
                <button class="w-[39px]">Swatches</button>
                <button class="w-[33px] h-[18px] flex items-center justify-center gap-[1px] bg-[#535353] font-semibold text-white"><svg class="w-[6px] h-[8px]"><use href="#i-spin"/></svg>Color</button>
                <button class="w-[45px] h-[18px] border-r border-[#404040]">Color Guide</button>
                <svg class="ml-auto size-[10px]"><use href="#i-expand"/></svg>
                <span class="ml-[3px] w-px h-2 bg-[#8a8a8a]"></span>
                <svg class="ml-1 size-[9px]"><use href="#i-menu"/></svg>
            </div>
            <div class="h-[22px] flex items-center pl-1">
                <svg class="size-[9px]" viewBox="0 0 9 9"><path d="M0 0h9v9H0z" fill="#fff"/><path d="m0 9 9-9" stroke="#d3122a" stroke-width="1.500"/></svg>
                <span class="size-[9px] bg-black"></span>
                <span class="size-[9px] bg-white border border-[#999999]"></span>
                <label for="hex" class="ml-auto mr-[5px] underline">#</label>
                <input id="hex" value="FFFFFF" class="mr-[11px] w-[38px] h-[12px] pl-[3px] bg-[#484848]">
            </div>
            <div class="ml-1 mr-[11px] h-4 bg-[linear-gradient(to_bottom,white,transparent_45%,transparent_45%,black),linear-gradient(to_right,#f00,#ff0,#0f0,#0ff,#00f,#f0f,#f00)]"></div>
            <div class="mt-auto h-[5px] flex justify-center border-t border-[#3e3e3e] bg-[#4a4a4a]"><span class="w-4 h-[2px] bg-[#3c3c3c]"></span></div>
        </section>

        <!-- Gradient -->
        <section class="absolute right-[13px] top-[399px] w-[156px] h-[177px] flex flex-col border border-[#3a3a3a] bg-[#535353]">
            <div class="h-[9px] flex items-center justify-end gap-[5px] pr-[1px] bg-[#424242]">
                <svg class="size-[6px]"><use href="#i-collapse"/></svg>
                <svg class="size-2"><use href="#i-x"/></svg>
            </div>
            <div class="h-[17px] flex items-center pr-[3px] border-b border-[#3e3e3e] bg-[#484848] text-[#c0c0c0]">
                <button class="w-[34px]">Stroke</button>
                <button class="w-[43px] h-[17px] flex items-center justify-center gap-[1px] bg-[#535353] font-semibold text-white"><svg class="w-[6px] h-[8px]"><use href="#i-spin"/></svg>Gradient</button>
                <svg class="ml-auto size-[9px]"><use href="#i-menu"/></svg>
            </div>
            <div class="flex pt-[4px] pl-[4px]">
                <div class="w-[28px]">
                    <div class="flex items-center gap-[2px]">
                        <span class="size-[22px] border border-[#333333] bg-linear-to-r from-white to-black"></span>
                        <svg class="size-1" viewBox="0 0 4 4"><path d="M0 1h4L2 3.500z" fill="currentColor"/></svg>
                    </div>
                    <div class="relative mt-[3px] h-5">
                        <span class="absolute left-[7px] top-[7px] size-3 grid place-items-center border border-[#cccccc] bg-black"><span class="size-[6px] border border-[#cccccc] bg-[#535353]"></span></span>
                        <span class="absolute left-0 top-0 size-[13px] border border-[#777777] bg-white"></span>
                    </div>
                    <svg class="ml-[3px] mt-[7px] size-[11px] text-[#858585]"><use href="#m-rev"/></svg>
                </div>
                <div class="flex-1 grid grid-cols-[24px_46px] auto-rows-[18px] gap-x-1 items-center justify-items-end">
                    <span class="font-medium text-white">Type:</span>
                    <div class="w-[46px] flex gap-[5px]">
                        <button class="size-3 border border-[#dddddd] bg-linear-to-r from-[#555555] to-[#dddddd]" aria-label="Linear"></button>
                        <button class="size-3 border border-[#dddddd] bg-radial from-[#eeeeee] to-[#555555]" aria-label="Radial"></button>
                        <button class="size-3 border border-[#dddddd] bg-linear-160 from-[#333333] via-[#eeeeee] to-[#444444]" aria-label="Freeform"></button>
                    </div>
                    <span class="text-[#777777]">Stroke:</span>
                    <div class="w-[46px] flex gap-[5px] text-[#7a7a7a]">
                        <svg class="size-[11px]"><use href="#m-within"/></svg>
                        <svg class="size-[11px]"><use href="#m-along"/></svg>
                        <svg class="size-[11px]"><use href="#m-across"/></svg>
                    </div>
                    <svg class="size-[10px] text-[#a0a0a0]"><use href="#m-angle"/></svg>
                    <div class="w-[46px] h-3 flex items-center bg-[#4f4f4f] text-[#858585]"><select disabled aria-label="Angle" class="appearance-none w-[35px] h-3"></select><svg class="size-2"><use href="#i-down"/></svg></div>
                    <svg class="size-[11px] text-[#a0a0a0]"><use href="#m-aspect"/></svg>
                    <div class="w-[46px] h-3 flex items-center bg-[#4f4f4f] text-[#858585]"><select disabled aria-label="Aspect ratio" class="appearance-none w-[35px] h-3"></select><svg class="size-2"><use href="#i-down"/></svg></div>
                </div>
            </div>
            <div class="mt-[10px] flex items-center pl-[10px]">
                <span class="w-[118px] h-[11px] border border-[#444444] bg-linear-to-r from-white to-black"></span>
                <svg class="ml-[9px] size-[10px] text-[#737373]"><use href="#m-trash"/></svg>
            </div>
            <div class="mt-[12px] flex items-center pl-[8px] text-[#7c7c7c]">
                <svg class="size-3 text-[#8a8a8a]"><use href="#t-eye"/></svg>
                <div class="ml-[7px] grid grid-cols-[29px_46px] auto-rows-[17px] gap-x-[3px] items-center justify-items-end">
                    <label for="gradOpacity">Opacity:</label>
                    <div class="w-[46px] h-3 flex items-center bg-[#4f4f4f]"><select disabled id="gradOpacity" class="appearance-none w-[35px] h-3"></select><svg class="size-2"><use href="#i-down"/></svg></div>
                    <label for="gradLocation">Location:</label>
                    <div class="w-[46px] h-3 flex items-center bg-[#4f4f4f]"><select disabled id="gradLocation" class="appearance-none w-[35px] h-3"></select><svg class="size-2"><use href="#i-down"/></svg></div>
                </div>
            </div>
            <div class="mt-auto h-[5px] flex justify-center border-t border-[#3e3e3e] bg-[#4a4a4a]"><span class="w-[14px] h-[2px] bg-[#3c3c3c]"></span></div>
        </section>
    </main>

    <!-- Windows taskbar -->
    <footer class="h-8 shrink-0 grid grid-cols-[1fr_auto_1fr] items-center bg-linear-to-r from-[#e8d9d9] via-[#dadde3] to-[#ecdcd6] text-[#222222] text-[8px]">
        <button class="flex items-center gap-[2px] pl-3 text-left">
            <svg class="w-[20px] h-[20px]" viewBox="0 0 20 20"><circle cx="9" cy="9" r="5" fill="#f5a83a"/><path d="M4 18a3.500 3.500 0 0 1 0-7 5 5 0 0 1 9 0 3.500 3.500 0 0 1 0 7z" fill="#b8cdf5"/><path d="M4 18a3.500 3.500 0 0 1-2.500-5h14A3.500 3.500 0 0 1 13 18z" fill="#90b2ee"/><circle cx="13.500" cy="5.500" r="5" fill="#c01c1c"/><text x="13.500" y="8" text-anchor="middle" font-size="7" fill="#fff">2</text></svg>
            <span>13°C<br><span class="text-[#666666]">Çok bulutlu</span></span>
        </button>
        <div class="flex items-center ml-[3px]">
            <button class="w-[27px] grid place-items-center" aria-label="Start"><svg class="size-4" viewBox="0 0 16 16"><path d="M0 0h7.600v7.600H0zM8.400 0H16v7.600H8.400zM0 8.400h7.600V16H0zM8.400 8.400H16V16H8.400z" fill="url(#g-win)"/></svg></button>
            <label class="ml-1 mr-px w-[145px] h-5 flex items-center gap-[6px] pl-[6px] rounded-full bg-[#f6f3f4] border border-[#d8d4d6]">
                <svg class="size-[11px] shrink-0"><use href="#i-search"/></svg>
                <input type="search" placeholder="Search" class="w-24 text-[9px] placeholder:text-[#666666]">
            </label>
            <div class="w-[413px] grid grid-cols-14 justify-items-center items-center">
                <svg class="size-4" viewBox="0 0 16 16"><path d="M5 1h11v11H5z" fill="#f5f5f5"/><path d="M1 4h11v11H1z" fill="#222"/><path d="M4 3h9v8H4z" fill="#aaa"/></svg>
                <svg class="size-4" viewBox="0 0 16 16"><path d="M5 1h5c1.500 0 2 1 2.500 3H9C7 4 6.500 6 6 8s-1 3.500-3 3.500C1 11.500.5 9.500 1 7.500L2.500 3C3 1.500 4 1 5 1z" fill="url(#g-cop)"/><path d="M11 15H6c-1.500 0-2-1-2.500-3H7c2 0 2.500-2 3-4s1-3.500 3-3.500 2.500 2 2 4L13.500 13c-.5 1.500-1.500 2-2.500 2z" fill="url(#g-cop2)"/></svg>
                <svg class="size-4" viewBox="0 0 16 16"><circle cx="8" cy="8" r="8" fill="url(#g-edge)"/><path d="M0 7C1 2 5 0 8 0c5 0 8 3.500 8 7 0 3-2 4-4 4s-3-1-2.500-2C11 6 7 3 3.500 4.500 1.500 5 .5 6 0 7z" fill="url(#g-edge2)"/><path d="M7 8c-1 4 3 6.500 7.500 4.500l1 .5.500-2c-3 1.500-7 1-6.500-2 0-1-1.500-2-2.500-1z" fill="#e4eef5"/></svg>
                <svg class="size-4" viewBox="0 0 16 16"><path d="M5 4V1.500h6V4" fill="none" stroke="#2a78c8" stroke-width="1.500"/><rect y="3.500" width="16" height="12.500" rx="2" fill="#1a4a7c"/><path d="M5 6h2.700v2.700H5z" fill="#f25022"/><path d="M8.300 6H11v2.700H8.300z" fill="#7fba00"/><path d="M5 9.300h2.700V12H5z" fill="#00a4ef"/><path d="M8.300 9.300H11V12H8.300z" fill="#ffb900"/></svg>
                <svg class="size-4" viewBox="0 0 16 16"><path d="M4 3 10 0l6 4v9.500L14 15H4z" fill="#1c8ee0"/><path d="m4 8 12-3v8c0 1-1 2-2 2H4z" fill="#40c0f4"/><rect y="4" width="9" height="9" rx="1.500" fill="#0c5fae"/><circle cx="4.500" cy="8.500" r="2.300" fill="none" stroke="#fff" stroke-width="1.300"/></svg>
                <svg class="size-4" viewBox="0 0 16 16"><path d="M.5 2h15v10H.5z" fill="url(#g-mon)"/><path d="M7 12h2v2H7zM4.500 14h7v1.200h-7z" fill="#4a6a80"/></svg>
                <div class="flex flex-col items-center pt-1 gap-px"><svg class="size-4" viewBox="0 0 16 16"><ellipse cx="8" cy="8" rx="6.500" ry="8" fill="#d80f2e"/><ellipse cx="8" cy="8" rx="2.800" ry="5.700" fill="#f0e6e8"/></svg><span class="w-1 h-[2px] rounded-full bg-[#777777]"></span></div>
                <svg class="size-4" viewBox="0 0 16 16"><path d="M1 1h5l1.500 2H15v11H1z" fill="#e9a820"/><path d="M1 4.500h14.500V14a1 1 0 0 1-1 1H2a1 1 0 0 1-1-1z" fill="#fbd34c"/><path d="M4 10h9v5H4z" fill="#2f86d0"/></svg>
                <svg class="size-4" viewBox="0 0 16 16"><rect x=".5" width="15" height="16" rx="3" fill="#0b0752"/><text x="8" y="11" text-anchor="middle" font-size="8" font-weight="600" fill="#a8a4ff">Ae</text></svg>
                <svg class="size-4" viewBox="0 0 16 16"><circle cx="10" cy="3" r="2.500" fill="#6f74d8"/><circle cx="14" cy="4" r="1.700" fill="#5a60c4"/><path d="M6 6h8v5c0 5-8 5-8 0zM13 6.500h3v4c0 2-1.500 3-3 2.500z" fill="#7b80e0"/><rect y="4" width="8.500" height="8.500" rx="1" fill="#464eb0"/><text x="4.250" y="10.500" text-anchor="middle" font-size="6" font-weight="700" fill="#fff">T</text></svg>
                <svg class="size-4" viewBox="0 0 16 16"><rect x=".5" width="15" height="16" rx="3" fill="#001e36"/><text x="8" y="11" text-anchor="middle" font-size="8" font-weight="600" fill="#31a8ff">Ps</text></svg>
                <div class="relative flex flex-col items-center pt-1 gap-px"><svg class="size-4" viewBox="0 0 16 16"><circle cx="8" cy="8" r="8" fill="#5765e8"/><path d="M4.500 4.500c2-1 5-1 7 0 1.500 2 2 4 1.800 6l-2.300 1-.8-1.200H5.800L5 11.500l-2.300-1c-.2-2 .3-4 1.800-6z" fill="#fff"/><circle cx="6" cy="8" r="1.100" fill="#5765e8"/><circle cx="10" cy="8" r="1.100" fill="#5765e8"/></svg><span class="w-1 h-[2px] rounded-full bg-[#777777]"></span><span class="absolute top-0 -right-1 size-[10px] rounded-full bg-[#d6404c] text-white text-[6px] leading-[10px] text-center">9+</span></div>
                <div class="relative flex flex-col items-center pt-1 gap-px"><svg class="size-4" viewBox="0 0 16 16"><circle cx="8" cy="8" r="7.500" fill="#26262a"/><path d="M8 8C5 7 4 5 5 3M8 8c2-2 4.500-2 6 0M8 8c.5 3-1 5-3 5" fill="none" stroke="#ccc" stroke-width="1.500"/></svg><span class="w-1 h-[2px] rounded-full bg-[#777777]"></span><span class="absolute top-px -right-1 size-2 rounded-full bg-[#ee0010]"></span></div>
                <div class="w-[26px] h-[25px] flex flex-col items-center justify-end gap-[2px] rounded-sm bg-[#f5f3f3]"><svg class="size-4" viewBox="0 0 16 16"><rect x=".5" width="15" height="16" rx="3" fill="#330000"/><text x="8" y="11" text-anchor="middle" font-size="8" font-weight="700" fill="#ff9a00">Ai</text></svg><span class="w-2 h-[2px] rounded-full bg-[#1879c8]"></span></div>
            </div>
        </div>
        <div class="flex items-center justify-end pr-[13px]">
            <svg class="size-[10px]"><use href="#i-up"/></svg>
            <svg class="ml-[11px] size-[11px]" viewBox="0 0 16 16"><path d="M5 12a3.500 3.500 0 0 1-1-7 5 5 0 0 1 9-.5" fill="none" stroke="#333" stroke-width="1.700"/><path d="M5 9c1-3 5-4 8-1" fill="none" stroke="#333" stroke-width="1.500"/><rect x="7.500" y="7.500" width="7.500" height="7.500" rx="2" fill="#999" stroke="#333"/><path d="M10 9v4M12.500 9v4" stroke="#fff"/></svg>
            <svg class="ml-[10px] size-[12px]" viewBox="0 0 16 16"><rect x="5.500" y="1" width="5" height="9" rx="2.500" fill="#4a8fe0"/><path d="M3.500 7.500c0 6 9 6 9 0M8 12v3.500" fill="none" stroke="#4078c0" stroke-width="1.300"/></svg>
            <svg class="ml-[11px] size-[11px]" viewBox="0 0 16 16"><path d="M10 2.500H1.500v9h8M4 14.500h6M7 12v2M12.500 6.500v5c0 2-1 3-3 3M10.500 1.500h4v5h-4z" fill="none" stroke="#222" stroke-width="1.300"/></svg>
            <svg class="ml-1 size-[12px]" viewBox="0 0 16 16"><path d="M1 6h3l4-3.500v11L4 10H1zM10 6c1 1 1 3 0 4M12 4c2 2 2 6 0 8M14 2.500c3 3 3 8 0 11" fill="none" stroke="#222" stroke-width="1.200"/></svg>
            <div class="w-[52px] text-right">03:48<br>09/10/2025</div>
        </div>
    </footer>
</body>
</html>
